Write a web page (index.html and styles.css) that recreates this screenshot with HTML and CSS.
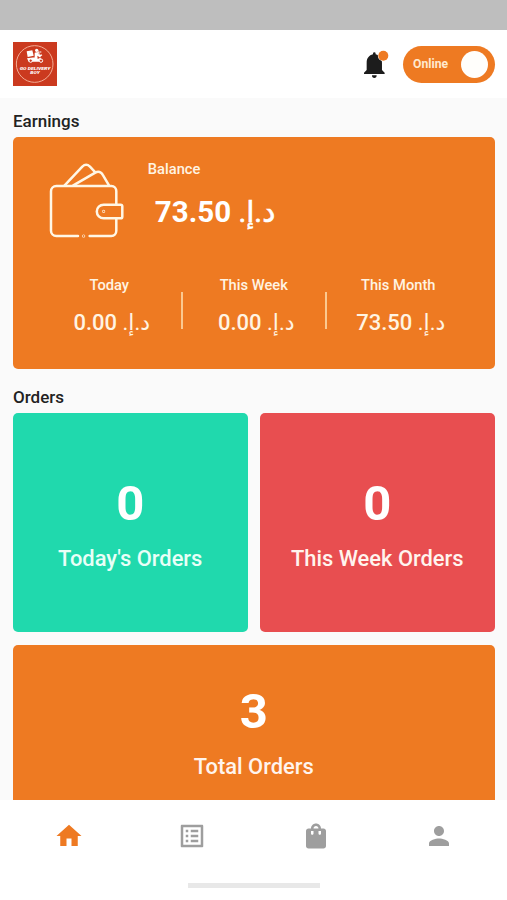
FILE: index.html
```html
<!DOCTYPE html>
<html lang="en">
<head>
<meta charset="utf-8">
<title>Go Delivery Boy</title>
<link rel="stylesheet" href="styles.css">
</head>
<body>
<div class="app">
  <div class="status-bar"></div>
  <header class="header">
    <svg class="logo" viewBox="0 0 132 132">
      <rect width="132" height="132" fill="#cb3a1f"/>
      <circle cx="65" cy="66" r="55" fill="none" stroke="#f3ac94" stroke-width="3"/>
      <g fill="#fff">
        <path d="M41 28l17-3 4 16-18 4z"/>
        <circle cx="71" cy="25" r="5"/>
        <path d="M65 32l9-2 5 10 6-3 3 3-8 6-7-5 1 10h-9zM42 49l24-3 8 5 8-4 4 6-8 6H47z"/>
      </g>
      <circle cx="53" cy="56" r="5" fill="#cb3a1f" stroke="#fff" stroke-width="3"/>
      <circle cx="84" cy="56" r="5" fill="#cb3a1f" stroke="#fff" stroke-width="3"/>
      <path d="M76 28l5 18M79 30h6" stroke="#fff" stroke-width="3" fill="none"/>
      <text class="logo-text" x="66" y="84" text-anchor="middle" textLength="92" lengthAdjust="spacingAndGlyphs">GO DELIVERY</text>
      <text class="logo-text" x="66" y="97" text-anchor="middle" textLength="28" lengthAdjust="spacingAndGlyphs">BOY</text>
    </svg>
    <div class="header-actions">
      <svg class="bell" viewBox="40 88 76 86">
        <path fill="#1c1c1c" d="M67 99a4 4 0 0 1 8 0v2c12 3 19 12 19 25v22l8 8v4H40v-4l8-8v-22c0-13 7-22 19-25z"/>
        <path fill="#1c1c1c" d="M64 164h14a7 8 0 0 1-14 0z"/>
        <circle cx="98" cy="105" r="16.500" fill="#fff"/>
        <circle cx="98" cy="105" r="15" fill="#ee7a22"/>
      </svg>
      <div class="toggle"><span>Online</span><i class="knob"></i></div>
    </div>
  </header>
  <main class="content">
    <h2 class="title">Earnings</h2>
    <section class="earnings">
      <div class="balance-row">
        <svg class="wallet" viewBox="54 36 232 232" fill="none" stroke="#fff7e6" stroke-width="7.5" stroke-linecap="round" stroke-linejoin="round">
          <path d="M144 258H79c-9 0-16-7-16-16V124c0-9 7-16 16-16h165c9 0 15 7 15 16v40M259 206v36c0 9-6 16-15 16h-65"/>
          <path d="M221 164h51q5 0 5 5v31q0 5-5 5h-51a20.500 20.500 0 0 1 0-41z"/>
          <path d="M104 106l53-56c7-7 16-7 23 0l16 17M130 106l66-38c9-5 18-2 22 6l19 32"/>
          <circle cx="221" cy="184" r="1"/>
          <circle cx="161" cy="258" r="1"/>
        </svg>
        <div class="balance">
          <div class="label">Balance</div>
          <div class="balance-value">73.50 <bdi class="currency" dir="rtl">د.إ.</bdi></div>
        </div>
      </div>
      <div class="stats">
        <div class="stat"><div class="label">Today</div><div class="stat-value">0.00 <bdi class="currency" dir="rtl">د.إ.</bdi></div></div>
        <div class="stat"><div class="label">This Week</div><div class="stat-value">0.00 <bdi class="currency" dir="rtl">د.إ.</bdi></div></div>
        <div class="stat"><div class="label">This Month</div><div class="stat-value">73.50 <bdi class="currency" dir="rtl">د.إ.</bdi></div></div>
      </div>
    </section>
    <h2 class="title orders-title">Orders</h2>
    <section class="orders">
      <div class="card green"><div class="count">0</div><div class="caption">Today's Orders</div></div>
      <div class="card red"><div class="count">0</div><div class="caption">This Week Orders</div></div>
      <div class="card total"><div class="count">3</div><div class="caption">Total Orders</div></div>
    </section>
  </main>
  <nav class="nav">
    <div class="tabs">
      <a class="tab active"><svg viewBox="0 0 24 24"><path d="M10 20v-6h4v6h5v-8h3L12 3 2 12h3v8z"/></svg></a>
      <a class="tab"><svg viewBox="0 0 24 24"><path d="M19 5v14H5V5h14m1.100-2H3.900c-.5 0-.9.4-.9.9v16.200c0 .4.4.9.9.9h16.200c.4 0 .9-.5.9-.9V3.900c0-.5-.5-.9-.9-.9zM11 7h6v2h-6V7zm0 4h6v2h-6v-2zm0 4h6v2h-6zM7 7h2v2H7zm0 4h2v2H7zm0 4h2v2H7z"/></svg></a>
      <a class="tab"><svg viewBox="0 0 24 24"><path d="M18 6h-2c0-2.210-1.790-4-4-4S8 3.790 8 6H6c-1.100 0-2 .9-2 2v12c0 1.100.9 2 2 2h12c1.100 0 2-.9 2-2V8c0-1.100-.9-2-2-2zm-8 4c0 .55-.45 1-1 1s-1-.45-1-1V8h2v2zm2-6c1.100 0 2 .9 2 2h-4c0-1.100.9-2 2-2zm4 6c0 .55-.45 1-1 1s-1-.45-1-1V8h2v2z"/></svg></a>
      <a class="tab"><svg viewBox="0 0 24 24"><path d="M12 12c2.210 0 4-1.790 4-4s-1.790-4-4-4-4 1.790-4 4 1.790 4 4 4zm0 2c-2.670 0-8 1.340-8 4v2h16v-2c0-2.660-5.330-4-8-4z"/></svg></a>
    </div>
    <div class="home-indicator"></div>
  </nav>
</div>
</body>
</html>
```
FILE: styles.css
```css
* { box-sizing: border-box; }
body {
  margin: 0;
  font-family: Roboto, "DejaVu Sans", sans-serif;
  font-weight: 500;
  background: #fafafa;
}
.app {
  height: 900px;
  display: flex;
  flex-direction: column;
  overflow: hidden;
}
.status-bar { height: 30px; background: #bebebe; flex: none; }
.header {
  flex: none;
  height: 68px;
  padding: 0 12px 0 13px;
  background: #fff;
  display: flex;
  align-items: center;
  justify-content: space-between;
}
.logo { width: 44px; height: 44px; }
.logo-text { font-size: 13px; font-weight: 900; font-style: italic; fill: #fff; }
.header-actions { display: flex; align-items: center; gap: 14px; }
.bell { width: 25.300px; height: 28.700px; }
.toggle {
  width: 92px;
  height: 37px;
  border-radius: 19px;
  background: #ee7a22;
  padding: 0 7px 0 10px;
  display: flex;
  align-items: center;
  justify-content: space-between;
  color: #ffe9cf;
  font-size: 12.200px;
  font-weight: 700;
}
.knob { width: 27px; height: 27px; border-radius: 50%; background: #fffefb; }
.content {
  flex: 1;
  min-height: 0;
  overflow: hidden;
  padding: 12.500px 12.500px 0 13px;
}
.title {
  margin: 0;
  font-size: 17px;
  line-height: 20px;
  font-weight: 500;
  color: #222;
}
.earnings {
  margin-top: 6px;
  height: 232px;
  padding: 25.500px 24px 0;
  border-radius: 5px;
  background: #ee7a22;
  color: #fff4e2;
}
.balance-row { display: flex; height: 114px; padding-left: 11px; }
.wallet { width: 77.300px; height: 77.300px; flex: none; }
.balance { padding-left: 22.500px; }
.label { font-size: 14.700px; line-height: 18px; }
.balance .label { margin-top: -2px; }
.balance-value {
  margin: 16px 0 0 7px;
  font-size: 29.500px;
  line-height: 36px;
  font-weight: 700;
  color: #fff;
  white-space: nowrap;
}
.currency { font-weight: 400; }
.balance-value .currency { -webkit-text-stroke: 0.600px currentColor; }
.stats { display: grid; grid-template-columns: repeat(3, 1fr); text-align: center; }
.stat { position: relative; height: 60px; white-space: nowrap; }
.stat + .stat::before {
  content: "";
  position: absolute;
  left: -1px;
  top: 16px;
  width: 2px;
  height: 37px;
  background: #fbc990;
}
.stat-value { margin-top: 15px; padding-left: 5px; font-size: 22px; line-height: 28px; }
.orders-title { margin-top: 18.500px; }
.orders {
  margin-top: 5.500px;
  display: grid;
  grid-template-columns: 1fr 1fr;
  grid-auto-rows: 219.500px;
  gap: 12.500px;
}
.card {
  border-radius: 5px;
  color: #fff;
  text-align: center;
  padding-top: 61px;
}
.green { background: #20d9ad; }
.red { background: #e84e50; }
.total { background: #ee7a22; grid-column: 1 / -1; padding-top: 37px; }
.count { font-size: 49px; line-height: 60px; font-weight: 700; }
.caption { margin-top: 10px; font-size: 21.900px; line-height: 30px; color: #fff4ee; }
.green .caption { color: #e9fff7; }
.nav {
  flex: none;
  height: 100px;
  background: #fff;
  padding: 20.500px 6px 0 7px;
}
.tabs { display: grid; grid-template-columns: repeat(4, 1fr); height: 62.500px; }
.tab { display: flex; justify-content: center; }
.tab svg { width: 30px; height: 30px; fill: #9e9e9e; }
.tab.active svg { fill: #ee7a22; }
.home-indicator { width: 132px; height: 5px; background: #e8e8e8; margin: 0 auto; }
```
